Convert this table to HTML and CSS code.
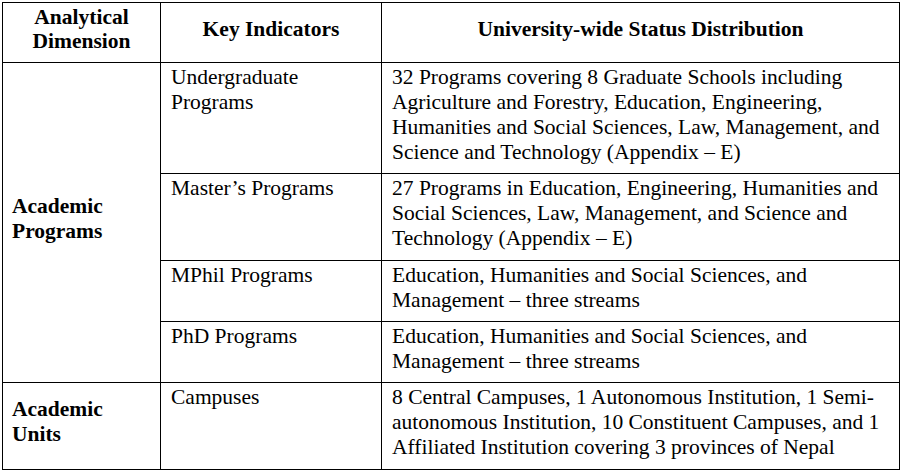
FILE: index.html
```html
<!DOCTYPE html>
<html>
<head>
<meta charset="utf-8">
<link rel="stylesheet" href="styles.css">
</head>
<body>
<table class="grid">
  <colgroup>
    <col class="c1">
    <col class="c2">
    <col class="c3">
  </colgroup>
  <thead>
    <tr class="head">
      <th>Analytical Dimension</th>
      <th>Key Indicators</th>
      <th>University-wide Status Distribution</th>
    </tr>
  </thead>
  <tbody>
    <tr class="r1">
      <td class="dim" rowspan="4">Academic Programs</td>
      <td>Undergraduate Programs</td>
      <td>32 Programs covering 8 Graduate Schools including Agriculture and Forestry, Education, Engineering, Humanities and Social Sciences, Law, Management, and Science and Technology (Appendix – E)</td>
    </tr>
    <tr class="r2">
      <td>Master’s Programs</td>
      <td>27 Programs in Education, Engineering, Humanities and Social Sciences, Law, Management, and Science and Technology (Appendix – E)</td>
    </tr>
    <tr class="r3">
      <td>MPhil Programs</td>
      <td>Education, Humanities and Social Sciences, and Management – three streams</td>
    </tr>
    <tr class="r4">
      <td>PhD Programs</td>
      <td>Education, Humanities and Social Sciences, and Management – three streams</td>
    </tr>
    <tr class="r5">
      <td class="dim last">Academic Units</td>
      <td>Campuses</td>
      <td>8 Central Campuses, 1 Autonomous Institution, 1 Semi-autonomous Institution, 10 Constituent Campuses, and 1 Affiliated Institution covering 3 provinces of Nepal</td>
    </tr>
  </tbody>
</table>
</body>
</html>
```

FILE: styles.css
```css
html, body {
  margin: 0;
  padding: 0;
  background: #fff;
}
body {
  padding: 2px 0 0 2px;
  font-family: "Liberation Serif", "Times New Roman", serif;
  font-size: 21.5px;
  line-height: 25px;
  color: #000;
}
.grid {
  border-collapse: collapse;
  table-layout: fixed;
  width: 897px;
}
.c1 { width: 158px; }
.c2 { width: 221px; }
.c3 { width: 518px; }
.grid th,
.grid td {
  border: 1px solid #000;
  padding: 2px 14px 4px 10px;
  vertical-align: top;
  text-align: left;
  font-weight: normal;
}
.grid th {
  font-weight: bold;
  text-align: center;
  vertical-align: middle;
  line-height: 24px;
  padding: 1px 8px 8px 8px;
}
.grid td.dim {
  font-weight: bold;
  vertical-align: middle;
  padding: 2px 22px 9px 9px;
}
.grid td.dim.last {
  padding-bottom: 11px;
}
.head { height: 60px; }
.r1 { height: 111px; }
.r2 { height: 87px; }
.r3 { height: 61px; }
.r4 { height: 61px; }
.r5 { height: 87px; }
```
